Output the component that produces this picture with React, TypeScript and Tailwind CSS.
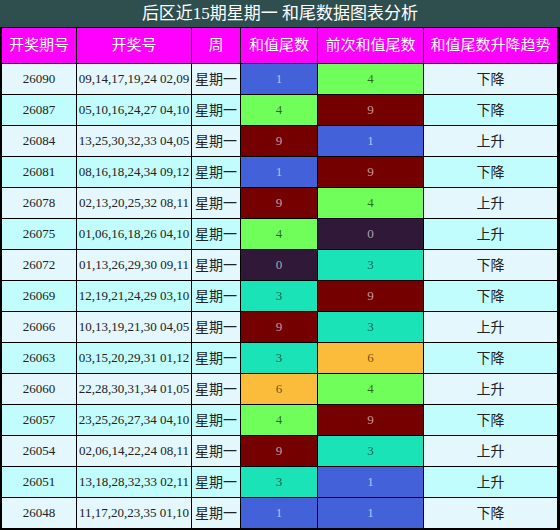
import React from 'react';

type Row = [string, string, number, number, string];

const rows: Row[] = [
  ['26090', '09,14,17,19,24 02,09', 1, 4, '下降'],
  ['26087', '05,10,16,24,27 04,10', 4, 9, '下降'],
  ['26084', '13,25,30,32,33 04,05', 9, 1, '上升'],
  ['26081', '08,16,18,24,34 09,12', 1, 9, '下降'],
  ['26078', '02,13,20,25,32 08,11', 9, 4, '上升'],
  ['26075', '01,06,16,18,26 04,10', 4, 0, '上升'],
  ['26072', '01,13,26,29,30 09,11', 0, 3, '下降'],
  ['26069', '12,19,21,24,29 03,10', 3, 9, '下降'],
  ['26066', '10,13,19,21,30 04,05', 9, 3, '上升'],
  ['26063', '03,15,20,29,31 01,12', 3, 6, '下降'],
  ['26060', '22,28,30,31,34 01,05', 6, 4, '上升'],
  ['26057', '23,25,26,27,34 04,10', 4, 9, '下降'],
  ['26054', '02,06,14,22,24 08,11', 9, 3, '上升'],
  ['26051', '13,18,28,32,33 02,11', 3, 1, '上升'],
  ['26048', '11,17,20,23,35 01,10', 1, 1, '下降'],
];

// colour per tail digit
const digitClass: Record<number, string> = {
  0: 'bg-[#301838] text-white/60',
  1: 'bg-[#4361d8] text-white/60',
  3: 'bg-[#1ae3b8] text-black/60',
  4: 'bg-[#70ff5a] text-black/60',
  6: 'bg-[#fbbb3b] text-black/60',
  9: 'bg-[#750000] text-white/60',
};

const headers = ['开奖期号', '开奖号', '周', '和值尾数', '前次和值尾数', '和值尾数升降趋势'];

const font = "font-['Liberation_Serif','Noto_Sans_CJK_SC',serif]";

export default function App() {
  return (
    <div className={`w-[560px] h-[530px] bg-black flex flex-col ${font}`}>
      <div className="h-[27px] bg-[#2f4f4f] text-white text-[17px] flex items-center justify-center leading-none">
        后区近15期星期一 和尾数据图表分析
      </div>
      <div className="grid grid-cols-[74px_114px_48px_76px_105px_1fr] grid-rows-[35px] auto-rows-[30px] gap-px pt-px pl-[2px] pr-[3px] pb-[2px]">
        {headers.map((h) => (
          <div key={h} className="bg-[#ff00ff] text-white text-[15px] flex items-center justify-center">
            {h}
          </div>
        ))}
        {rows.map(([issue, nums, tail, prev, trend], i) => {
          const bg = i % 2 === 0 ? 'bg-[#e3f7fd]' : 'bg-[#c1fdfc]';
          return (
            <React.Fragment key={issue}>
              <div className={`${bg} text-[13px] text-[#222] flex items-center justify-center`}>{issue}</div>
              <div className={`${bg} text-[13px] text-[#222] flex items-center justify-center`}>{nums}</div>
              <div className={`${bg} text-[14px] text-[#222] flex items-center justify-center`}>星期一</div>
              <div className={`${digitClass[tail]} text-[13px] flex items-center justify-center`}>{tail}</div>
              <div className={`${digitClass[prev]} text-[13px] flex items-center justify-center`}>{prev}</div>
              <div className={`${bg} text-[14px] text-[#222] flex items-center justify-center`}>{trend}</div>
            </React.Fragment>
          );
        })}
      </div>
    </div>
  );
}
